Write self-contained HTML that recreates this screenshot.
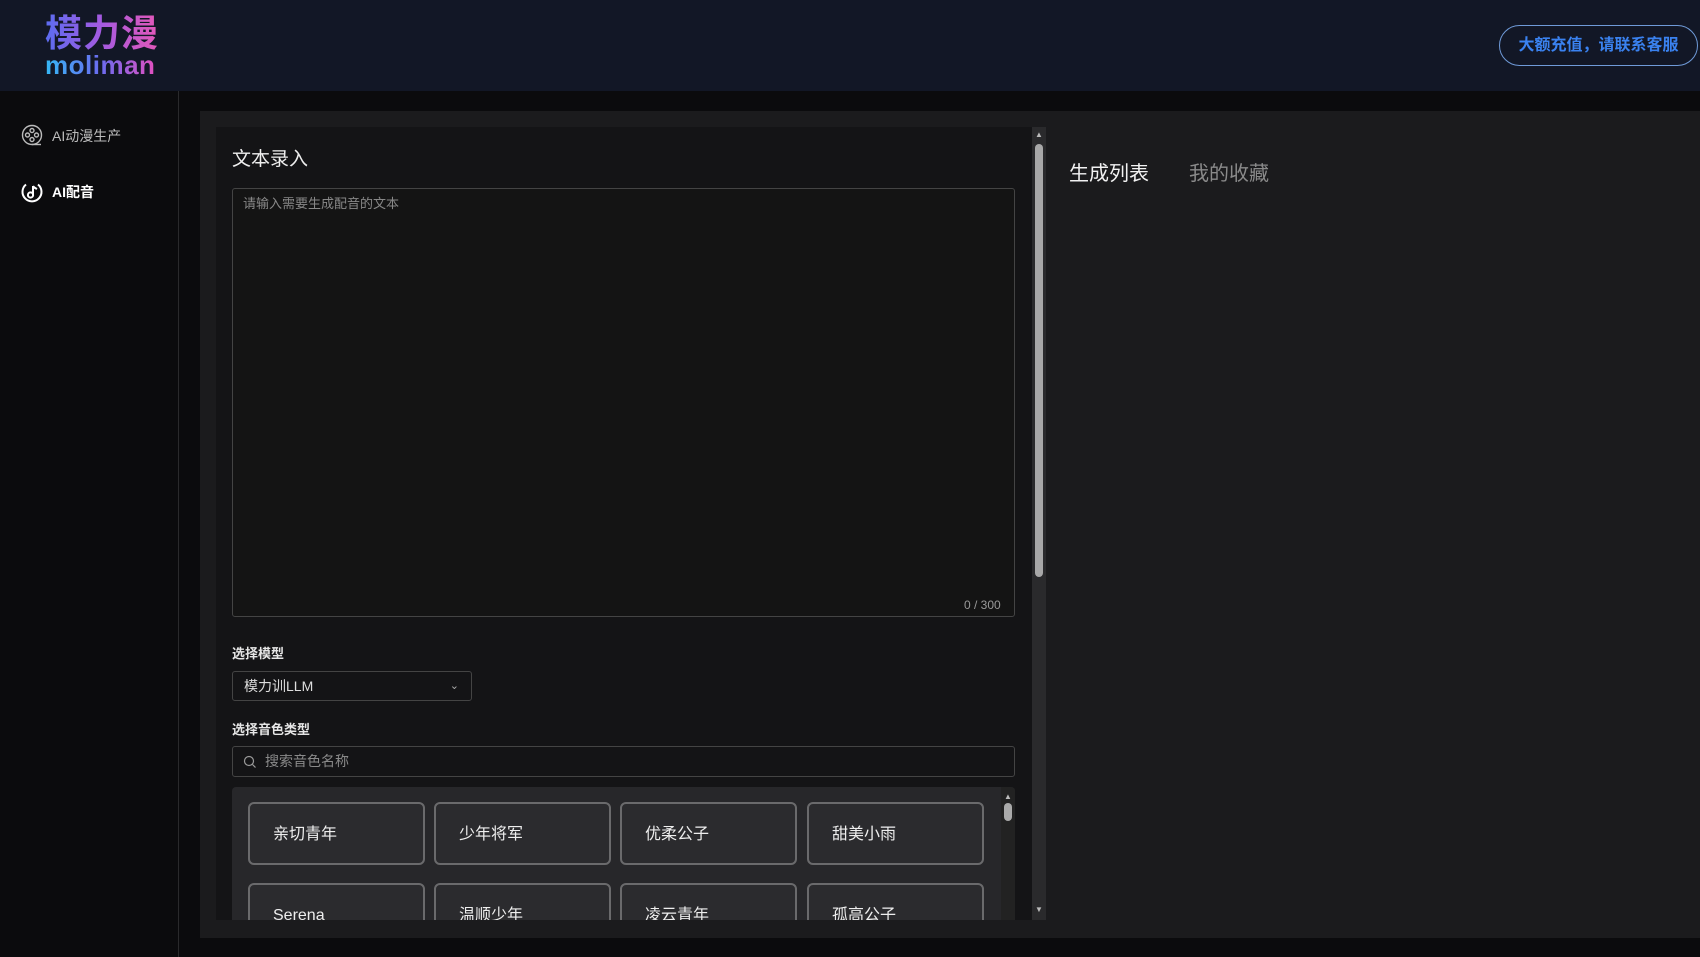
<!DOCTYPE html>
<html><head><meta charset="utf-8"><style>
*{margin:0;padding:0;box-sizing:border-box}
body{width:1700px;height:957px;background:#0b0b0d;font-family:"Liberation Sans","Noto Sans CJK SC",sans-serif;position:relative;overflow:hidden;color:#ddd}
.abs{position:absolute}
.header{left:0;top:0;width:1700px;height:91px;background:#121726}
.logo1{left:45px;top:12px;font-size:37px;font-weight:bold;letter-spacing:1px;background:linear-gradient(90deg,#5b6cf0,#a55ae0,#e458b8);-webkit-background-clip:text;color:transparent;line-height:44px}
.logo2{left:45px;top:51px;font-size:26px;font-weight:bold;background:linear-gradient(90deg,#35b8f5,#6a6cf0,#e150c0);-webkit-background-clip:text;color:transparent;line-height:28px;letter-spacing:0.5px}
.btn{left:1499px;top:25px;width:199px;height:41px;border:1px solid #6f9ad8;border-radius:21px;color:#3a82f0;font-size:16px;font-weight:bold;text-align:center;line-height:39px}
.side{left:0;top:91px;width:179px;height:866px;border-right:1px solid #2a2a2c;background:#0b0b0d}
.nav{left:52px;font-size:14px}
.main{left:200px;top:111px;width:1500px;height:827px;background:#1b1b1d}
.card{left:216px;top:127px;width:816px;height:793px;background:#141416;overflow:hidden}
.ta{left:232px;top:188px;width:783px;height:429px;border:1px solid #444;border-radius:3px;background:#141414}
.lbl{font-size:13px;font-weight:bold;color:#e6e6e6}
.sel{left:232px;top:671px;width:240px;height:30px;border:1px solid #444;border-radius:3px;font-size:14px;color:#ddd;padding-left:11px;line-height:28px}
.search{left:232px;top:746px;width:783px;height:31px;border:1px solid #444;border-radius:3px;font-size:14px;color:#8a8a8a;line-height:29px;padding-left:32px}
.grid{left:232px;top:787px;width:783px;height:133px;background:#27272a;border-radius:4px 4px 0 0;overflow:hidden}
.v{position:absolute;width:177px;height:63px;border:2px solid #6a6a6c;border-radius:6px;background:#2b2b2e;font-size:16px;color:#eee;padding-left:23px;line-height:61px}
.sb{left:1032px;top:127px;width:14px;height:793px;background:#2a2a2c}
.tab{top:157px;font-size:20px}
</style></head><body>
<div class="abs header"></div>
<div class="abs logo1">模力漫</div>
<div class="abs logo2">moliman</div>
<div class="abs btn">大额充值，请联系客服</div>
<div class="abs side"></div>
<svg class="abs" style="left:20px;top:124px" width="24" height="24" viewBox="0 0 24 24" fill="none" stroke="#bbb" stroke-width="1.4"><circle cx="12" cy="11" r="9.5"/><circle cx="12" cy="6.5" r="2"/><circle cx="7.5" cy="11" r="2"/><circle cx="16.5" cy="11" r="2"/><circle cx="12" cy="15.5" r="2"/><path d="M12 20.5h9"/></svg>
<div class="abs nav" style="top:126px;color:#bbb">AI动漫生产</div>
<svg class="abs" style="left:20px;top:180px" width="24" height="24" viewBox="0 0 24 24" fill="none" stroke="#fff" stroke-width="2"><path d="M6 4.5A9.5 9.5 0 1 0 18 4.5"/><path d="M13 6v9"/><circle cx="10.5" cy="15" r="2.6"/><path d="M13 6c1 2 3 2.5 4 3"/></svg>
<div class="abs nav" style="top:182px;color:#fff;font-weight:bold">AI配音</div>
<div class="abs main"></div>
<div class="abs card"></div>
<div class="abs" style="left:232px;top:144px;font-size:19px;color:#eee">文本录入</div>
<div class="abs ta"></div>
<div class="abs" style="left:243px;top:193px;font-size:13px;color:#888">请输入需要生成配音的文本</div>
<div class="abs" style="left:964px;top:598px;font-size:12px;color:#999">0 / 300</div>
<div class="abs lbl" style="left:232px;top:643px">选择模型</div>
<div class="abs sel">模力训LLM<span style="position:absolute;right:12px;top:0;font-size:11px;color:#aaa">&#8964;</span></div>
<div class="abs lbl" style="left:232px;top:719px">选择音色类型</div>
<div class="abs search">搜索音色名称</div>
<svg class="abs" style="left:243px;top:755px" width="14" height="14" viewBox="0 0 14 14" fill="none" stroke="#999" stroke-width="1.2"><circle cx="6" cy="6" r="4.5"/><path d="M9.5 9.5l3 3"/></svg>
<div class="abs grid">
<div class="v" style="left:16px;top:15px">亲切青年</div>
<div class="v" style="left:202px;top:15px">少年将军</div>
<div class="v" style="left:388px;top:15px">优柔公子</div>
<div class="v" style="left:575px;top:15px">甜美小雨</div>
<div class="v" style="left:16px;top:96px">Serena</div>
<div class="v" style="left:202px;top:96px">温顺少年</div>
<div class="v" style="left:388px;top:96px">凌云青年</div>
<div class="v" style="left:575px;top:96px">孤高公子</div>
<div style="position:absolute;left:769px;top:0;width:14px;height:133px;background:#222"></div>
<div style="position:absolute;left:772px;top:5px;font-size:8px;color:#bbb">▲</div>
<div style="position:absolute;left:772px;top:16px;width:8px;height:18px;border-radius:4px;background:#aaa"></div>
</div>
<div class="abs sb"></div>
<div class="abs" style="left:1035px;top:130px;font-size:8px;color:#bbb">▲</div>
<div class="abs" style="left:1035px;top:144px;width:8px;height:433px;border-radius:4px;background:#a8a8a8"></div>
<div class="abs" style="left:1035px;top:905px;font-size:8px;color:#bbb">▼</div>
<div class="abs tab" style="left:1069px;color:#f2f2f2">生成列表</div>
<div class="abs tab" style="left:1189px;color:#8a8a8a">我的收藏</div>
</body></html>
